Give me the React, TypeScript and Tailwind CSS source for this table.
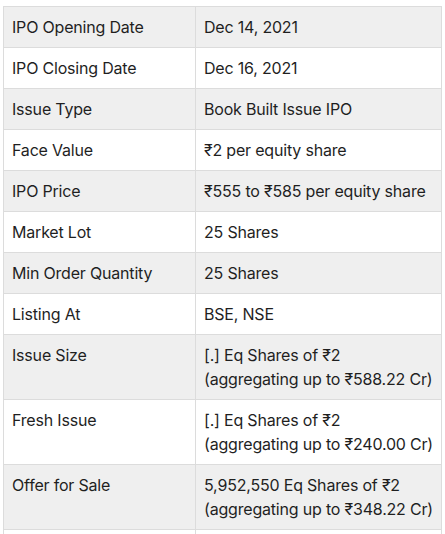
const rows: [string, string[]][] = [
  ['IPO Opening Date', ['Dec 14, 2021']],
  ['IPO Closing Date', ['Dec 16, 2021']],
  ['Issue Type', ['Book Built Issue IPO']],
  ['Face Value', ['₹2 per equity share']],
  ['IPO Price', ['₹555 to ₹585 per equity share']],
  ['Market Lot', ['25 Shares']],
  ['Min Order Quantity', ['25 Shares']],
  ['Listing At', ['BSE, NSE']],
  ['Issue Size', ['[.] Eq Shares of ₹2', '(aggregating up to ₹588.22 Cr)']],
  ['Fresh Issue', ['[.] Eq Shares of ₹2', '(aggregating up to ₹240.00 Cr)']],
  ['Offer for Sale', ['5,952,550 Eq Shares of ₹2', '(aggregating up to ₹348.22 Cr)']],
  ['', ['']],
];

export default function App() {
  return (
    <div className="h-[534px] overflow-hidden bg-white pl-[3px] pt-[6px] font-['Inter',sans-serif] text-[16px] leading-[24px] tracking-[-0.012em] text-[#1f1f1f]">
      <table className="w-[439px] border-collapse table-fixed">
        <tbody>
          {rows.map(([label, value], i) => (
            <tr key={i} className={i % 2 === 0 ? 'bg-[#efefef]' : 'bg-white'}>
              <td className="w-[192px] h-[41px] border border-[#dcdcdc] px-[8px] py-[8px] align-top">{label}</td>
              <td className="border border-[#dcdcdc] py-[8px] pl-[8px] pr-[4px] align-top">
                {value.map((line, j) => (
                  <div key={j} className="whitespace-nowrap">{line}</div>
                ))}
              </td>
            </tr>
          ))}
        </tbody>
      </table>
    </div>
  );
}
